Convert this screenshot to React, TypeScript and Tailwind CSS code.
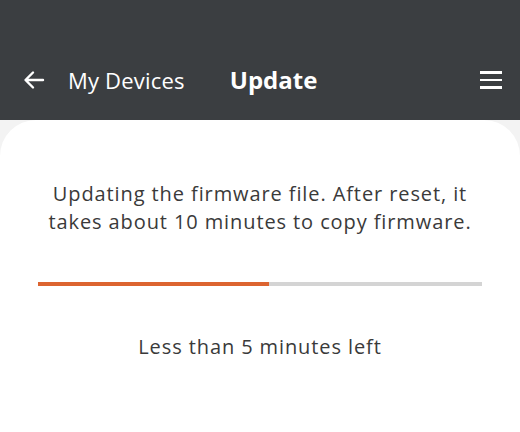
import React from "react";

const progress = 52;

export default function App() {
    return (
        <div className="w-[520px] h-[432px] flex flex-col bg-[#f3f3f3] overflow-hidden" style={{fontFamily: "'Open Sans', 'Noto Sans', sans-serif"}}>
            {/* top bar */}
            <div className="h-[120px] shrink-0 bg-[#3b3e41] flex items-end pb-[25px] text-white">
                <div className="flex items-center w-full h-[30px]">
                    <svg className="ml-[23px]" width="22" height="20" viewBox="0 0 22 20" fill="none" stroke="white"
                         strokeWidth="2.4" strokeLinecap="round" strokeLinejoin="round">
                        <path d="M20 10H3M10 2.5L2.5 10L10 17.5"/>
                    </svg>
                    <span className="ml-[23px] text-[22px] tracking-[0.2px]">My Devices</span>
                    <span className="ml-[45px] text-[24px] font-bold">Update</span>
                    <div className="ml-auto mr-[18px] flex flex-col gap-[5px]">
                        <span className="block w-[22px] h-[2.5px] bg-white"/>
                        <span className="block w-[22px] h-[2.5px] bg-white"/>
                        <span className="block w-[22px] h-[2.5px] bg-white"/>
                    </div>
                </div>
            </div>

            {/* content card */}
            <div className="flex-1 bg-white rounded-t-[36px] flex flex-col items-center pt-[60px] text-[#3a3a3a] tracking-[0.9px]">
                <p className="text-[20px] leading-[28px] text-center whitespace-nowrap">
                    Updating the firmware file. After reset, it<br/>
                    takes about 10 minutes to copy firmware.
                </p>
                <div className="mt-[46px] w-[444px] h-[4px] bg-[#d4d4d4]">
                    <div className="h-full bg-[#dc6430]" style={{width: `${progress}%`}}/>
                </div>
                <p className="mt-[46px] text-[20px]">Less than 5 minutes left</p>
            </div>
        </div>
    );
}
